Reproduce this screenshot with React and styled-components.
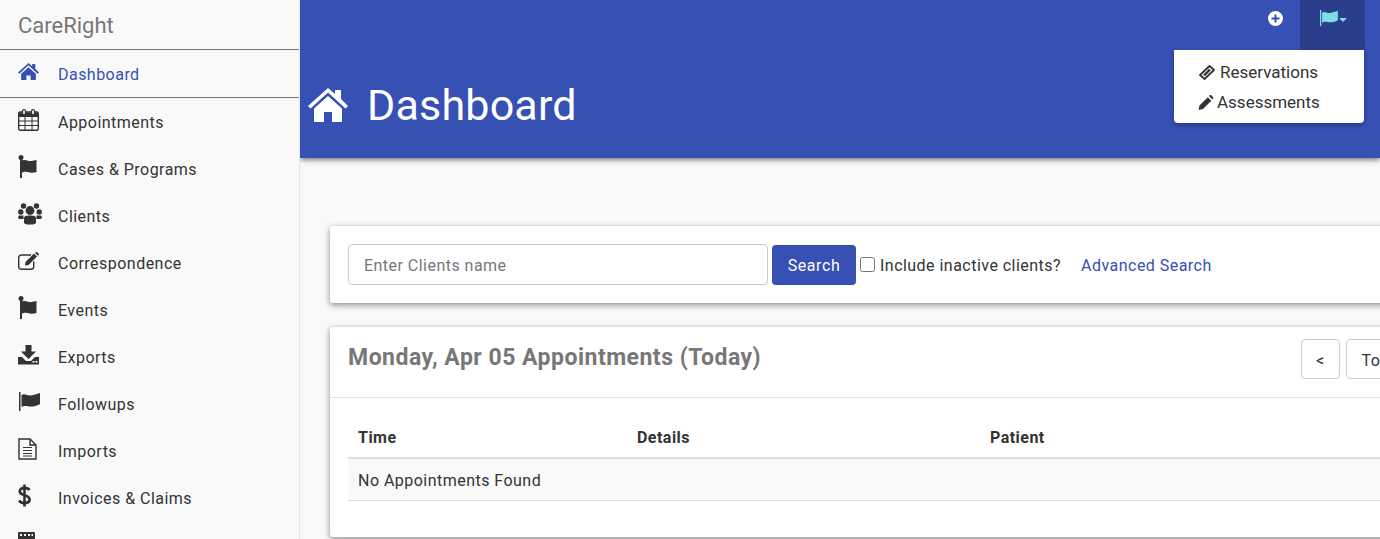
import React from 'react';
import styled, { createGlobalStyle } from 'styled-components';

const BRAND = '#3650b3';
const BRAND_DARK = '#2a3e8c';
const TEXT = '#333333';
const PAGE = '#f9f9f9';
const ACCENT = '#7fdcea';

const GlobalStyle = createGlobalStyle`
    html, body {
        margin: 0;
        padding: 0;
        height: 100%;
        overflow: hidden;
        background: ${PAGE};
    }
    body {
        font-family: Roboto, "Liberation Sans", sans-serif;
        font-size: 16px;
        letter-spacing: 0.47px;
        color: ${TEXT};
    }
    * {
        box-sizing: border-box;
    }
`;

const HomeIcon = ({ size = 20, color = 'currentColor' }) => (
    <svg width={size} height={size * 0.85} viewBox="0 0 40 34" fill={color}>
        <path d="M20 0 L27 6 V2 H33 V11 L40 18 L37.5 20.5 L20 4.5 L2.5 20.5 L0 18 Z" />
        <path d="M20 8 L34 20.5 V34 H24 V24 H16 V34 H6 V20.5 Z" />
    </svg>
);

const CalendarIcon = () => (
    <svg width="21" height="22" viewBox="0 0 21 22" fill="none" stroke="currentColor">
        <rect x="0.7" y="3" width="19.6" height="18.3" rx="1.5" strokeWidth="1.4" />
        <rect x="1" y="3.5" width="19" height="4.5" fill="currentColor" stroke="none" />
        <path d="M1 12H20M1 16.5H20M7 8V21M14 8V21" strokeWidth="1" />
        <rect x="4.5" y="0.7" width="3" height="5" rx="1.5" fill="#f9f9f9" strokeWidth="1.2" />
        <rect x="13.5" y="0.7" width="3" height="5" rx="1.5" fill="#f9f9f9" strokeWidth="1.2" />
    </svg>
);

const FlagIcon = () => (
    <svg width="20" height="23" viewBox="0 0 20 23" fill="currentColor">
        <circle cx="3" cy="2.5" r="2.5" />
        <rect x="2" y="3" width="2" height="20" />
        <path d="M4 5.5 C8 4 10 6.5 13 6 C15 5.8 17 5.5 18.5 5 V17 C16 17.8 14 18 12 17.6 C9 17 7 16 4 17.5 Z" />
    </svg>
);

const UsersIcon = () => (
    <svg width="24" height="22" viewBox="0 0 24 22" fill="currentColor">
        <circle cx="5.5" cy="3" r="2.7" />
        <circle cx="18.5" cy="3" r="2.7" />
        <circle cx="2.8" cy="9" r="2.7" />
        <circle cx="21.2" cy="9" r="2.7" />
        <circle cx="12" cy="7.5" r="4.4" />
        <path d="M1 12.5 H5.5 V16 H1 C0 16 0 12.5 1 12.5 Z" />
        <path d="M23 12.5 H18.5 V16 H23 C24 16 24 12.5 23 12.5 Z" />
        <path d="M6 15.5 C6 13 8 12.4 12 12.4 C16 12.4 18 13 18 15.5 V19.5 C18 21 16 21.5 12 21.5 C8 21.5 6 21 6 19.5 Z" />
    </svg>
);

const EditIcon = () => (
    <svg width="22" height="18" viewBox="0 0 22 18" fill="currentColor">
        <path d="M13 3 H3.5 C2 3 0.7 4 0.7 5.5 V14.5 C0.7 16 2 17.2 3.5 17.2 H13 C14.5 17.2 15.7 16 15.7 14.5 V9.5" fill="none" stroke="currentColor" strokeWidth="1.4" />
        <path d="M7.5 10 L16 1.5 L19 4.5 L10.5 13 L7 13.5 Z" />
        <path d="M17 0.8 L17.8 0.2 C18.2 -0.1 18.7 0 19.2 0.3 L20.7 1.8 C21 2.3 21 2.7 20.7 3 L20 3.8 Z" />
    </svg>
);

const DownloadIcon = () => (
    <svg width="21" height="20" viewBox="0 0 21 20" fill="currentColor">
        <path d="M7.5 0 H13.5 V6.5 H18 L10.5 14 L3 6.5 H7.5 Z" />
        <path d="M0 12 H4 L8 16 H13 L17 12 H21 V19.5 H0 Z" />
        <rect x="14.5" y="16" width="2" height="1.6" fill="#f9f9f9" />
        <rect x="17.5" y="16" width="2" height="1.6" fill="#f9f9f9" />
    </svg>
);

const WaveFlagIcon = ({ width = 22, height = 20 }) => (
    <svg width={width} height={height} viewBox="0 0 22 20" fill="currentColor">
        <rect x="1" y="0" width="1.5" height="19" />
        <path d="M3.5 3 C7 1 9 4 13 3.5 C16 3 18.5 2 22 1 V12 C18.5 14 16 14.5 13 14.5 C9 14.5 7 13 3.5 15 Z" />
    </svg>
);

const FileIcon = () => (
    <svg width="19" height="22" viewBox="0 0 19 22" fill="none" stroke="currentColor" strokeWidth="1.4">
        <path d="M1 1 H12 L18 7 V21 H1 Z" />
        <path d="M12 1 V7 H18" />
        <path d="M5 9.5 H14M5 12.5 H14M5 15.5 H14M5 18 H14" strokeWidth="1.1" />
    </svg>
);

const DollarIcon = () => (
    <svg width="13" height="23" viewBox="0 0 13 23" fill="none" stroke="currentColor">
        <path d="M11.5 6 C10.5 4.5 9 4 6.5 4 C3.5 4 1.8 5.2 1.8 7.3 C1.8 12.5 11.5 10 11.5 15.5 C11.5 17.8 9.5 19 6.5 19 C4 19 2.3 18.3 1 16.5" strokeWidth="2.8" />
        <path d="M6.5 0.5 V22.5" strokeWidth="2.6" />
    </svg>
);

const GridIcon = () => (
    <svg width="17" height="22" viewBox="0 0 17 22" fill="currentColor">
        <rect x="0" y="0" width="17" height="22" rx="1" />
        <path d="M2 2H4V4H2ZM6 2H8V4H6ZM10 2H12V4H10ZM13.5 2H15V4H13.5Z" fill="#f9f9f9" />
    </svg>
);

const PlusCircleIcon = () => (
    <svg width="15" height="15" viewBox="0 0 15 15">
        <circle cx="7.5" cy="7.5" r="7.5" fill="#ffffff" />
        <path d="M7.5 3.5 V11.5 M3.5 7.5 H11.5" stroke={BRAND} strokeWidth="2" />
    </svg>
);

const TicketIcon = () => (
    <svg width="16" height="15" viewBox="0 0 16 15" fill="none" stroke="currentColor">
        <path d="M10.5 1 L15 5 L5.5 14 L1 10 Z" strokeWidth="1.8" strokeLinejoin="round" />
        <path d="M11 4.5 L5 10.5" strokeWidth="2.4" />
    </svg>
);

const PencilIcon = () => (
    <svg width="16" height="15" viewBox="0 0 16 15" fill="currentColor">
        <path d="M0.5 15 L1.5 10.5 L9.8 2.3 L13.3 5.7 L5 14 Z" />
        <path d="M11 1.1 L11.8 0.3 C12.3 -0.1 12.8 0 13.3 0.3 L15 2 C15.4 2.5 15.4 3 15 3.5 L14.3 4.4 Z" />
    </svg>
);

const MENU_ITEMS = [
    { label: 'Appointments', icon: <CalendarIcon /> },
    { label: 'Cases & Programs', icon: <FlagIcon /> },
    { label: 'Clients', icon: <UsersIcon /> },
    { label: 'Correspondence', icon: <EditIcon /> },
    { label: 'Events', icon: <FlagIcon /> },
    { label: 'Exports', icon: <DownloadIcon /> },
    { label: 'Followups', icon: <WaveFlagIcon /> },
    { label: 'Imports', icon: <FileIcon /> },
    { label: 'Invoices & Claims', icon: <DollarIcon /> },
    { label: '', icon: <GridIcon /> },
];

const App = () => (
    <Page>
        <GlobalStyle />
        <Sidebar>
            <Brand>CareRight</Brand>
            <ActiveItem>
                <IconSlot><HomeIcon size={21} /></IconSlot>
                <MenuLabel>Dashboard</MenuLabel>
            </ActiveItem>
            {MENU_ITEMS.map(item => (
                <MenuItem key={item.label}>
                    <IconSlot>{item.icon}</IconSlot>
                    <MenuLabel>{item.label}</MenuLabel>
                </MenuItem>
            ))}
        </Sidebar>
        <Main>
            <Header>
                <TopNav>
                    <PlusButton><PlusCircleIcon /></PlusButton>
                    <FlagButton>
                        <WaveFlagIcon width={19} height={17} />
                        <Caret />
                    </FlagButton>
                    <Dropdown>
                        <DropdownItem $indent={25} $gap={5}><TicketIcon />Reservations</DropdownItem>
                        <DropdownItem $indent={24} $gap={3}><PencilIcon />Assessments</DropdownItem>
                    </Dropdown>
                </TopNav>
                <Title>
                    <HomeIcon size={40} color="#ffffff" />
                    Dashboard
                </Title>
            </Header>
            <Content>
                <SearchCard>
                    <SearchInput placeholder="Enter Clients name" readOnly />
                    <SearchButton>Search</SearchButton>
                    <InactiveLabel>
                        <Checkbox type="checkbox" readOnly />
                        Include inactive clients?
                    </InactiveLabel>
                    <AdvancedLink>Advanced Search</AdvancedLink>
                </SearchCard>
                <AppointmentsCard>
                    <CardHead>
                        <CardTitle>Monday, Apr 05 Appointments (Today)</CardTitle>
                        <Pager>
                            <PagerButton $pad={14}>&lt;</PagerButton>
                            <PagerButton $pad={15}>Today</PagerButton>
                        </Pager>
                    </CardHead>
                    <CardBody>
                        <TableHead>
                            <TimeCol>Time</TimeCol>
                            <DetailsCol>Details</DetailsCol>
                            <span>Patient</span>
                        </TableHead>
                        <EmptyRow>No Appointments Found</EmptyRow>
                    </CardBody>
                </AppointmentsCard>
            </Content>
        </Main>
    </Page>
);

const Page = styled.div`
    display: flex;
    width: 1380px;
    height: 539px;
    overflow: hidden;
    background: ${PAGE};
`;

const Sidebar = styled.nav`
    flex: 0 0 300px;
    border-right: 1px solid #e7e7e7;
    background: ${PAGE};
    overflow: hidden;
`;

const Brand = styled.div`
    height: 50px;
    padding: 13px 0 0 18px;
    font-size: 22px;
    line-height: 26px;
    letter-spacing: 0;
    color: #777777;
    border-bottom: 1px solid #777777;
`;

const MenuItem = styled.div`
    display: flex;
    align-items: center;
    height: 47px;
    font-size: 16px;
    color: ${TEXT};
`;

const ActiveItem = styled(MenuItem)`
    height: 48px;
    color: ${BRAND};
    border-bottom: 1px solid #777777;
`;

const IconSlot = styled.span`
    display: flex;
    flex: 0 0 58px;
    padding: 0 0 4px 18px;
`;

const MenuLabel = styled.span`
    padding-top: 2px;
`;

const Main = styled.div`
    flex: 1;
    min-width: 0;
    display: flex;
    flex-direction: column;
    overflow: hidden;
`;

const Header = styled.header`
    position: relative;
    z-index: 1;
    flex: 0 0 158px;
    background: ${BRAND};
    box-shadow: 0 2px 5px rgba(0, 0, 0, 0.5);
`;

const TopNav = styled.div`
    position: relative;
    display: flex;
    justify-content: flex-end;
    height: 50px;
    padding-right: 15px;
`;

const PlusButton = styled.div`
    width: 50px;
    padding: 11px 0 0 0;
    display: flex;
    justify-content: center;
    align-items: flex-start;
`;

const FlagButton = styled.div`
    display: flex;
    justify-content: center;
    align-items: flex-start;
    gap: 1px;
    width: 65px;
    height: 50px;
    padding-top: 10px;
    background: ${BRAND_DARK};
    color: ${ACCENT};
`;

const Caret = styled.span`
    margin-top: 8px;
    border-top: 4px solid ${ACCENT};
    border-left: 4px solid transparent;
    border-right: 4px solid transparent;
`;

const Dropdown = styled.div`
    position: absolute;
    top: 50px;
    right: 16px;
    width: 190px;
    height: 73px;
    padding-top: 7px;
    background: #ffffff;
    border-radius: 0 0 4px 4px;
    box-shadow: 0 2px 5px rgba(0, 0, 0, 0.3);
`;

const DropdownItem = styled.div`
    display: flex;
    align-items: center;
    gap: ${props => props.$gap}px;
    height: 30px;
    padding-left: ${props => props.$indent}px;
    font-size: 17px;
    letter-spacing: 0;
    color: ${TEXT};
`;

const Title = styled.h1`
    display: flex;
    align-items: center;
    gap: 19px;
    margin: 0;
    padding: 28px 0 0 8px;
    font-size: 43px;
    font-weight: 400;
    line-height: 54px;
    letter-spacing: 0.2px;
    color: #ffffff;
`;

const Content = styled.main`
    flex: 1;
    display: flex;
    flex-direction: column;
    gap: 24px;
    padding: 68px 0 0 30px;
`;

const Card = styled.section`
    flex: none;
    width: 1120px;
    background: #ffffff;
    border-radius: 3px;
    box-shadow: 0 2px 6px rgba(0, 0, 0, 0.45);
`;

const SearchCard = styled(Card)`
    display: flex;
    align-items: center;
    height: 77px;
    padding: 0 18px;
`;

const SearchInput = styled.input`
    width: 420px;
    height: 41px;
    padding: 2px 15px 0;
    font-family: inherit;
    font-size: 16px;
    letter-spacing: 0.47px;
    color: ${TEXT};
    background: #ffffff;
    border: 1px solid #cccccc;
    border-radius: 4px;
    outline: none;

    &::placeholder {
        color: #777777;
    }
`;

const SearchButton = styled.button`
    width: 84px;
    height: 40px;
    margin-left: 4px;
    padding: 2px 0 0;
    font-family: inherit;
    font-size: 16px;
    letter-spacing: 0.6px;
    color: #ffffff;
    background: ${BRAND};
    border: none;
    border-radius: 4px;
`;

const InactiveLabel = styled.label`
    display: flex;
    align-items: center;
    margin-left: 4px;
    padding-top: 2px;
    font-size: 16px;
`;

const Checkbox = styled.input`
    width: 15px;
    height: 15px;
    margin: -3px 5px 0 0;
`;

const AdvancedLink = styled.a`
    margin-left: 20px;
    padding-top: 1px;
    font-size: 16px;
    color: ${BRAND};
`;

const AppointmentsCard = styled(Card)`
    height: 210px;
`;

const CardHead = styled.div`
    display: flex;
    justify-content: space-between;
    height: 71px;
    padding: 12px 18px;
    border-bottom: 1px solid #e0e0e0;
`;

const CardTitle = styled.h2`
    margin: 5px 0 0 0;
    font-size: 23px;
    font-weight: 700;
    line-height: 28px;
    letter-spacing: 0.49px;
    color: #777777;
`;

const Pager = styled.div`
    display: flex;
    gap: 6px;
    margin-right: 9px;
`;

const PagerButton = styled.button`
    height: 40px;
    padding: 2px ${props => props.$pad}px 0;
    font-family: inherit;
    font-size: 16px;
    letter-spacing: 0.47px;
    color: ${TEXT};
    background: #ffffff;
    border: 1px solid #cccccc;
    border-radius: 4px;
`;

const CardBody = styled.div`
    padding: 19px 18px 0;
`;

const TableHead = styled.div`
    display: flex;
    align-items: center;
    height: 42px;
    padding-left: 10px;
    font-weight: 700;
    border-bottom: 2px solid #dddddd;
`;

const TimeCol = styled.span`
    width: 279px;
`;

const DetailsCol = styled.span`
    width: 353px;
`;

const EmptyRow = styled.div`
    display: flex;
    align-items: center;
    height: 42px;
    padding: 1px 0 0 10px;
    background: ${PAGE};
    border-bottom: 1px solid #dddddd;
`;

export default App;
